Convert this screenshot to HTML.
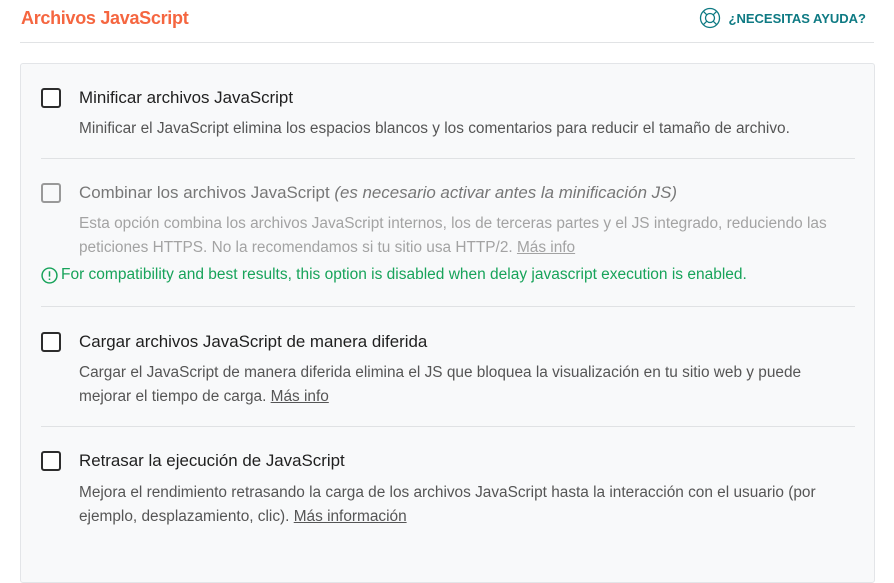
<!DOCTYPE html>
<html><head><meta charset="utf-8"><style>
*{margin:0;padding:0;box-sizing:border-box}
body{width:894px;height:565px;background:#fff;font-family:"Liberation Sans",Arial,sans-serif;position:relative;overflow:hidden;color:#333}
.h{position:absolute;left:21px;top:8px;font-size:18px;font-weight:bold;color:#f56640;letter-spacing:-0.3px}
.help{position:absolute;right:28px;top:7px;font-size:13px;font-weight:bold;color:#0e7a83;display:flex;align-items:center;gap:8px}
.hl{position:absolute;left:20px;right:20px;top:42px;border-top:1px solid #e1e3e5}
.panel{position:absolute;left:20px;top:63px;width:855px;height:520px;background:#f8f9fa;border:1px solid #e3e5e8;border-radius:3px}
.cb{position:absolute;left:41px;width:20px;height:20px;border:2px solid #2d2d2d;border-radius:3px;background:#fff}
.t{position:absolute;left:79px;font-size:16.9px;color:#1f1f1f;white-space:nowrap}
.d{position:absolute;left:79px;width:780px;font-size:15.4px;line-height:23.5px;color:#555}
.sep{position:absolute;left:41px;width:814px;border-top:1px solid #e0e2e4}
.dis .t{color:#777}.dis .d{color:#a3a3a3}
u{color:inherit}
</style></head><body>
<div class="h">Archivos JavaScript</div>
<div class="help"><svg width="22" height="22" viewBox="0 0 22 22" fill="none" stroke="#0e7a83" stroke-width="1.3"><circle cx="11" cy="11" r="9.5"/><circle cx="11" cy="11" r="4.5"/><path d="M4.3 4.3l3.5 3.5M17.7 4.3l-3.5 3.5M4.3 17.7l3.5-3.5M17.7 17.7l-3.5-3.5"/></svg>¿NECESITAS AYUDA?</div>
<div class="hl"></div>
<div class="panel"></div>

<div class="cb" style="top:88px"></div>
<div class="t" style="top:88px">Minificar archivos JavaScript</div>
<div class="d" style="top:117px">Minificar el JavaScript elimina los espacios blancos y los comentarios para reducir el tamaño de archivo.</div>
<div class="sep" style="top:158px"></div>

<div class="dis">
<div class="cb" style="top:183px;border-color:#999;background:#f8f9fa"></div>
<div class="t" style="top:183px">Combinar los archivos JavaScript <i>(es necesario activar antes la minificación JS)</i></div>
<div class="d" style="top:212px">Esta opción combina los archivos JavaScript internos, los de terceras partes y el JS integrado, reduciendo las peticiones HTTPS. No la recomendamos si tu sitio usa HTTP/2. <u>Más info</u></div>
</div>
<div style="position:absolute;left:41px;top:266px;font-size:15.5px;color:#17a35a;white-space:nowrap;display:flex;align-items:center;gap:3px"><svg width="17" height="17" viewBox="0 0 16 16" fill="none" stroke="#17a35a" stroke-width="1.4"><circle cx="8" cy="8" r="7"/><path d="M8 4v5M8 10.8v1.4"/></svg>For compatibility and best results, this option is disabled when delay javascript execution is enabled.</div>
<div class="sep" style="top:306px"></div>

<div class="cb" style="top:332px"></div>
<div class="t" style="top:332px">Cargar archivos JavaScript de manera diferida</div>
<div class="d" style="top:361px;width:740px">Cargar el JavaScript de manera diferida elimina el JS que bloquea la visualización en tu sitio web y puede mejorar el tiempo de carga. <u>Más info</u></div>
<div class="sep" style="top:426px"></div>

<div class="cb" style="top:451px"></div>
<div class="t" style="top:451px">Retrasar la ejecución de JavaScript</div>
<div class="d" style="top:481px">Mejora el rendimiento retrasando la carga de los archivos JavaScript hasta la interacción con el usuario (por ejemplo, desplazamiento, clic). <u>Más información</u></div>
</body></html>
